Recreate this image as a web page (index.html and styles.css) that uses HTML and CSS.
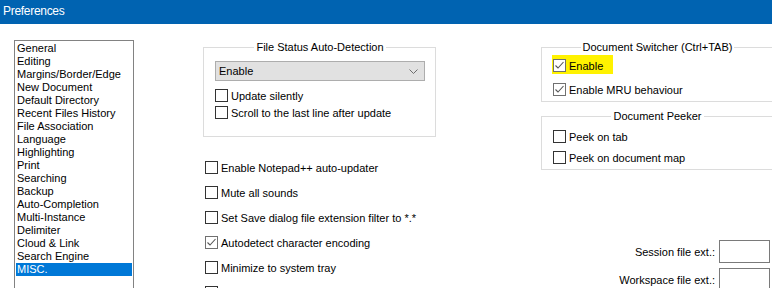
FILE: index.html
```html
<!DOCTYPE html>
<html lang="en">
<head>
  <meta charset="UTF-8" />
  <title>Preferences</title>
  <link rel="stylesheet" href="styles.css">
</head>
<body>

<div class="titlebar">Preferences</div>

<div class="main">
  <div class="listbox">
    <div class="item">General</div>
    <div class="item">Editing</div>
    <div class="item">Margins/Border/Edge</div>
    <div class="item">New Document</div>
    <div class="item">Default Directory</div>
    <div class="item">Recent Files History</div>
    <div class="item">File Association</div>
    <div class="item">Language</div>
    <div class="item">Highlighting</div>
    <div class="item">Print</div>
    <div class="item">Searching</div>
    <div class="item">Backup</div>
    <div class="item">Auto-Completion</div>
    <div class="item">Multi-Instance</div>
    <div class="item">Delimiter</div>
    <div class="item">Cloud &amp; Link</div>
    <div class="item">Search Engine</div>
    <div class="item selected">MISC.</div>
  </div>

  <div class="col-mid">
    <fieldset class="group file-status">
      <legend>File Status Auto-Detection</legend>
      <div class="dropdown">
        <span>Enable</span>
        <svg class="chevron" width="9" height="5" viewBox="0 0 9 5"><polyline points="0.5,0.5 4.5,4.5 8.5,0.5" fill="none" stroke="#6d6d6d" stroke-width="1"/></svg>
      </div>
      <div class="check"><span class="cb"></span>Update silently</div>
      <div class="check gap-sm"><span class="cb"></span>Scroll to the last line after update</div>
    </fieldset>

    <div class="misc-checks">
      <div class="check"><span class="cb"></span>Enable Notepad++ auto-updater</div>
      <div class="check"><span class="cb"></span>Mute all sounds</div>
      <div class="check"><span class="cb"></span>Set Save dialog file extension filter to *.*</div>
      <div class="check"><span class="cb on"><svg width="11" height="11" viewBox="0 0 11 11"><polyline points="1.5,5.5 4,8 9.5,2" fill="none" stroke="#555" stroke-width="1.1"/></svg></span>Autodetect character encoding</div>
      <div class="check"><span class="cb"></span>Minimize to system tray</div>
      <div class="check"><span class="cb"></span>Show only filename in title bar</div>
    </div>
  </div>

  <div class="col-right">
    <fieldset class="group switcher">
      <legend>Document Switcher (Ctrl+TAB)</legend>
      <div class="check"><span class="marker"><span class="cb on"><svg width="11" height="11" viewBox="0 0 11 11"><polyline points="1.5,5.5 4,8 9.5,2" fill="none" stroke="#555" stroke-width="1.1"/></svg></span>Enable</span></div>
      <div class="check gap-lg"><span class="cb on"><svg width="11" height="11" viewBox="0 0 11 11"><polyline points="1.5,5.5 4,8 9.5,2" fill="none" stroke="#555" stroke-width="1.1"/></svg></span>Enable MRU behaviour</div>
    </fieldset>

    <fieldset class="group peeker">
      <legend>Document Peeker</legend>
      <div class="check"><span class="cb"></span>Peek on tab</div>
      <div class="check gap-md"><span class="cb"></span>Peek on document map</div>
    </fieldset>

    <div class="ext-row first">
      <span>Session file ext.:</span>
      <span class="textbox"></span>
    </div>
    <div class="ext-row">
      <span>Workspace file ext.:</span>
      <span class="textbox"></span>
    </div>
  </div>
</div>

</body>
</html>
```

FILE: styles.css
```css
* { box-sizing: border-box; }
body {
  margin: 0;
  width: 772px;
  height: 288px;
  overflow: hidden;
  background: #fff;
  color: #000;
  font-family: 'Liberation Sans', Arial, sans-serif;
  font-size: 11px;
}
.titlebar {
  height: 24px;
  line-height: 22px;
  padding-left: 3px;
  background: #0063b1;
  color: #fff;
  font-size: 12px;
  letter-spacing: -0.3px;
}
.main {
  display: flex;
  align-items: flex-start;
  padding: 16px 0 0 14px;
}
.listbox {
  flex-shrink: 0;
  width: 120px;
  height: 260px;
  border: 1px solid #828282;
  padding: 1px;
}
.item {
  height: 13px;
  line-height: 13px;
  padding-left: 1px;
  white-space: nowrap;
}
.item.selected { background: #0078d7; color: #fff; }

.col-mid {
  flex-shrink: 0;
  width: 233px;
  margin: 1px 0 0 69px;
}
.col-right {
  flex-shrink: 0;
  width: 232px;
  margin: 1px 0 0 105px;
}

.group {
  margin: 0;
  padding: 0 10px 0 11px;
  min-width: 0;
  border: 1px solid #dcdcdc;
}
.group legend {
  margin: 0 auto;
  padding: 0 2px;
  line-height: 13px;
  font-size: 11px;
}
.file-status { padding-bottom: 17px; }
.switcher { padding-bottom: 5px; }
.peeker { margin-top: 8px; padding-bottom: 5px; }

.dropdown {
  display: flex;
  justify-content: space-between;
  align-items: center;
  height: 20px;
  margin: 7px 0 8px;
  padding: 0 3px 0 3px;
  background: #e1e1e1;
  border: 1px solid #adadad;
}
.chevron { margin-right: 3px; }

.check {
  display: flex;
  align-items: center;
  height: 13px;
  white-space: nowrap;
}
.cb {
  display: inline-flex;
  flex-shrink: 0;
  width: 13px;
  height: 13px;
  margin-right: 3px;
  border: 1px solid #333;
  background: #fff;
}
.cb.on { border-color: #707070; }
.gap-sm { margin-top: 4px; }
.gap-md { margin-top: 8px; }
.gap-lg { margin-top: 11px; }

.switcher .check:first-of-type { margin-top: 5px; }
.peeker .check:first-of-type { margin-top: 7px; }

.marker {
  display: inline-flex;
  align-items: center;
  margin: -4px 0 -2px -1px;
  padding: 4px 10px 2px 1px;
  background: #fff200;
}

.misc-checks {
  margin-top: 24px;
  padding-left: 2px;
  display: flex;
  flex-direction: column;
  gap: 12px;
}

.ext-row {
  display: flex;
  justify-content: flex-end;
  align-items: center;
  gap: 4px;
  height: 23px;
  margin-top: 5px;
  padding-right: 3px;
}
.ext-row.first { margin-top: 70px; }
.textbox {
  width: 51px;
  height: 23px;
  border: 1px solid #7a7a7a;
  background: #fff;
}
```
